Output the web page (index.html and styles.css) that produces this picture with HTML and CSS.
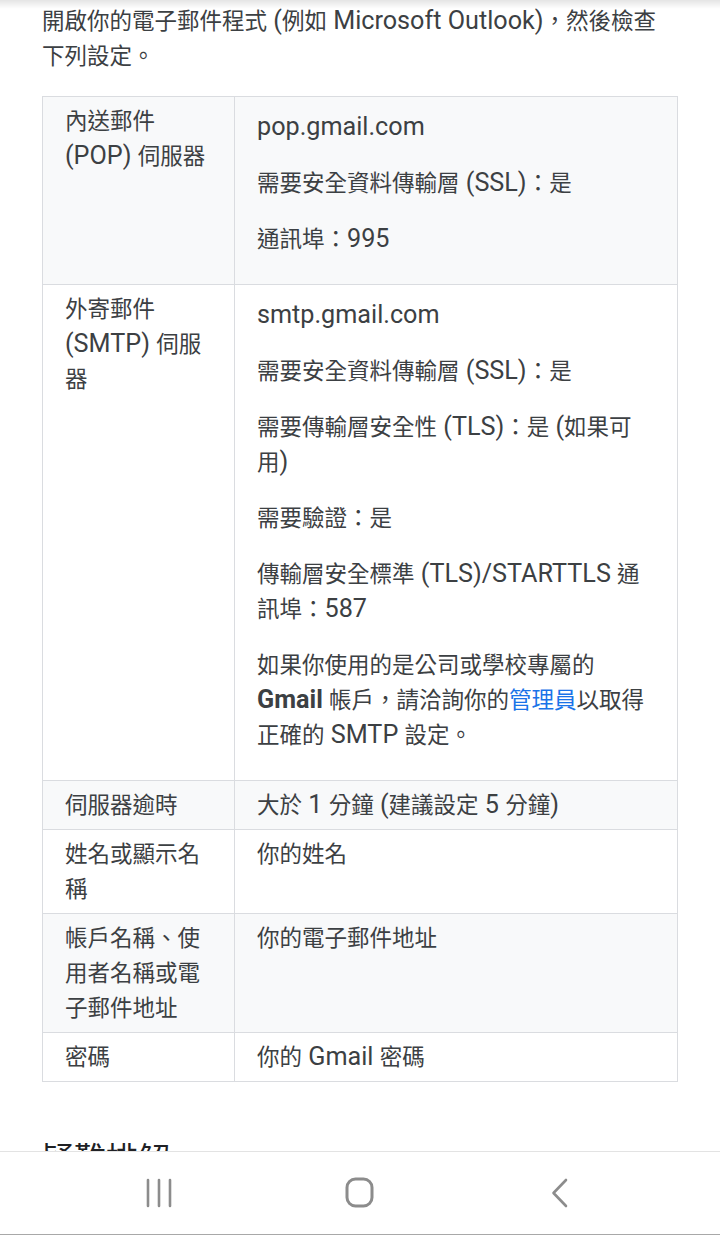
FILE: index.html
```html
<!DOCTYPE html>
<html lang="zh-Hant">
<head>
<meta charset="utf-8">
<title>POP 設定</title>
<link rel="stylesheet" href="styles.css">
</head>
<body>
<div class="top-shadow"></div>
<main class="page">
  <p class="intro">開啟你的電子郵件程式<span class="en"> (</span>例如<span class="en"> Microsoft Outlook)</span>，然後檢查下列設定。</p>
  <table class="settings">
    <colgroup>
      <col class="col-label">
      <col class="col-value">
    </colgroup>
    <tbody>
      <tr class="shaded">
        <td>內送郵件<span class="en"> (POP) </span>伺服器</td>
        <td class="value">
          <p><span class="en">pop.gmail.com</span></p>
          <p>需要安全資料傳輸層<span class="en"> (SSL)</span>：是</p>
          <p>通訊埠：<span class="en">995</span></p>
        </td>
      </tr>
      <tr>
        <td>外寄郵件<span class="en"> (SMTP) </span>伺服器</td>
        <td class="value">
          <p><span class="en">smtp.gmail.com</span></p>
          <p>需要安全資料傳輸層<span class="en"> (SSL)</span>：是</p>
          <p>需要傳輸層安全性<span class="en"> (TLS)</span>：是<span class="en"> (</span>如果可用<span class="en">)</span></p>
          <p>需要驗證：是</p>
          <p>傳輸層安全標準<span class="en"> (TLS)/STARTTLS </span>通訊埠：<span class="en">587</span></p>
          <p>如果你使用的是公司或學校專屬的<span class="en"> </span><b class="en">Gmail</b><span class="en"> </span>帳戶，請洽詢你的<a href="#">管理員</a>以取得正確的<span class="en"> SMTP </span>設定。</p>
        </td>
      </tr>
      <tr class="shaded">
        <td>伺服器逾時</td>
        <td>大於<span class="en"> 1 </span>分鐘<span class="en"> (</span>建議設定<span class="en"> 5 </span>分鐘<span class="en">)</span></td>
      </tr>
      <tr>
        <td>姓名或顯示名稱</td>
        <td>你的姓名</td>
      </tr>
      <tr class="shaded">
        <td>帳戶名稱、使用者名稱或電子郵件地址</td>
        <td>你的電子郵件地址</td>
      </tr>
      <tr>
        <td>密碼</td>
        <td>你的<span class="en"> Gmail </span>密碼</td>
      </tr>
    </tbody>
  </table>
  <h2 class="section-title">疑難排解</h2>
  <p class="filler">如果無法使用<span class="en"> POP </span>下載郵件，請確認設定是否正確。</p>
</main>
<nav class="navbar">
  <span class="nav-btn">
    <svg width="30" height="30" viewBox="0 0 30 30" aria-hidden="true">
      <path d="M4 2v26M15 2v26M26 2v26" fill="none" stroke="#8c8c8c" stroke-width="2.6" stroke-linecap="round"/>
    </svg>
  </span>
  <span class="nav-btn">
    <svg width="32" height="34" viewBox="0 0 32 34" aria-hidden="true">
      <rect x="3" y="3" width="25" height="27" rx="8.5" ry="8.5" fill="none" stroke="#8c8c8c" stroke-width="3"/>
    </svg>
  </span>
  <span class="nav-btn">
    <svg width="22" height="32" viewBox="0 0 22 32" aria-hidden="true">
      <path d="M16 3L3.5 16L16 29" fill="none" stroke="#8c8c8c" stroke-width="2.6" stroke-linecap="round" stroke-linejoin="round"/>
    </svg>
  </span>
</nav>
</body>
</html>
```
FILE: styles.css
```css
html, body {
  margin: 0;
  padding: 0;
  background: #ffffff;
}

body {
  font-family: Roboto, "Noto Sans CJK TC", "Noto Sans", sans-serif;
  font-size: 22.5px;
  line-height: 35px;
  color: #3c4043;
}

.en {
  font-size: 1.12em;
  line-height: 1;
}

.top-shadow {
  position: fixed;
  top: 0;
  left: 0;
  right: 0;
  height: 9px;
  background: linear-gradient(to bottom, rgba(0, 0, 0, 0.10), rgba(0, 0, 0, 0));
  pointer-events: none;
}

.page {
  padding: 0 42px 0 42px;
}

.intro {
  margin: 4px 0 22px 0;
}

.settings {
  width: 100%;
  border-collapse: collapse;
  table-layout: fixed;
  border: 1px solid #dadce0;
}

.col-label {
  width: 192px;
}

.settings td {
  border: 1px solid #dadce0;
  padding: 7px 22px 6px 22px;
  vertical-align: top;
}

.settings tr.shaded td {
  background: #f8f9fa;
}

.settings td.value p {
  margin: 6px 0 21px 0;
}

.settings b {
  font-weight: 700;
  color: #3c4043;
}

.settings a {
  color: #1a73e8;
  text-decoration: none;
}

.section-title {
  margin: 56px 0 0 0;
  font-size: 32px;
  line-height: 42px;
  font-weight: 400;
  color: #202124;
}

.filler {
  margin: 16px 0 0 0;
}

.navbar {
  position: fixed;
  left: 0;
  right: 0;
  bottom: 0;
  height: 82px;
  background: #ffffff;
  border-top: 1px solid #e3e3e3;
  border-bottom: 1px solid #a8a8a8;
  display: grid;
  grid-template-columns: repeat(3, 1fr);
  align-items: center;
  justify-items: center;
  padding: 0 58px;
}

.nav-btn {
  display: flex;
  align-items: center;
  justify-content: center;
  height: 40px;
}

.nav-btn svg {
  display: block;
}
```
